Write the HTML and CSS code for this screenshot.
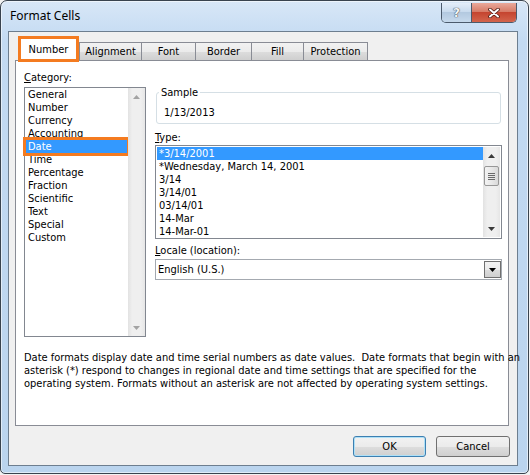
FILE: index.html
```html
<!DOCTYPE html>
<html lang="en">
<head>
    <meta charset="UTF-8">
    <title>Format Cells</title>
    <link rel="stylesheet" href="styles.css">
</head>
<body>

<div class="window">
    <div class="titlebar">
        <span class="title">Format Cells</span>
        <div class="caption-buttons">
            <div class="cap-btn help">?</div>
            <div class="cap-btn close">
                <svg width="12" height="10" viewBox="0 0 12 10">
                    <path d="M2 1.5 L10 8.5 M10 1.5 L2 8.5" stroke="#4a1a12" stroke-width="3.6" stroke-linecap="round"/>
                    <path d="M2 1.5 L10 8.5 M10 1.5 L2 8.5" stroke="#ffffff" stroke-width="2" stroke-linecap="round"/>
                </svg>
            </div>
        </div>
    </div>

    <div class="client">
        <div class="tabs">
            <div class="tab active">Number</div>
            <div class="tab w-align">Alignment</div>
            <div class="tab w-font">Font</div>
            <div class="tab w-border">Border</div>
            <div class="tab w-fill">Fill</div>
            <div class="tab w-prot">Protection</div>
        </div>

        <div class="panel">
            <div class="columns">
                <div class="col-left">
                    <div class="label"><u>C</u>ategory:</div>
                    <div class="listbox category">
                        <ul class="items">
                            <li>General</li>
                            <li>Number</li>
                            <li>Currency</li>
                            <li>Accounting</li>
                            <li class="selected marked">Date</li>
                            <li>Time</li>
                            <li>Percentage</li>
                            <li>Fraction</li>
                            <li>Scientific</li>
                            <li>Text</li>
                            <li>Special</li>
                            <li>Custom</li>
                        </ul>
                        <div class="scrollbar disabled">
                            <div class="arrow"><svg width="7" height="4"><path d="M0 4 L3.5 0 L7 4Z"/></svg></div>
                            <div class="arrow"><svg width="7" height="4"><path d="M0 0 L3.5 4 L7 0Z"/></svg></div>
                        </div>
                    </div>
                </div>

                <div class="col-right">
                    <fieldset class="sample">
                        <legend>Sample</legend>
                        <div>1/13/2013</div>
                    </fieldset>

                    <div class="label type-label"><u>T</u>ype:</div>
                    <div class="listbox type">
                        <ul class="items">
                            <li class="selected">*3/14/2001</li>
                            <li>*Wednesday, March 14, 2001</li>
                            <li>3/14</li>
                            <li>3/14/01</li>
                            <li>03/14/01</li>
                            <li>14-Mar</li>
                            <li>14-Mar-01</li>
                        </ul>
                        <div class="scrollbar">
                            <div class="arrow"><svg width="7" height="4"><path d="M0 4 L3.5 0 L7 4Z"/></svg></div>
                            <div class="thumb">
                                <svg width="7" height="7"><path d="M0 0.5 H7 M0 2.5 H7 M0 4.5 H7 M0 6.5 H7" stroke="#6a6a6a" stroke-width="1"/></svg>
                            </div>
                            <div class="spacer"></div>
                            <div class="arrow"><svg width="7" height="4"><path d="M0 0 L3.5 4 L7 0Z"/></svg></div>
                        </div>
                    </div>

                    <div class="label locale-label"><u>L</u>ocale (location):</div>
                    <div class="combo">
                        <span class="combo-text">English (U.S.)</span>
                        <div class="drop-btn"><svg width="7" height="4"><path d="M0 0 L3.5 4 L7 0Z"/></svg></div>
                    </div>
                </div>
            </div>

            <p class="note">
                Date formats display date and time serial numbers as date values.&nbsp; Date formats that begin with an<br>
                asterisk (*) respond to changes in regional date and time settings that are specified for the<br>
                operating system. Formats without an asterisk are not affected by operating system settings.
            </p>
        </div>

        <div class="actions">
            <button class="btn default">OK</button>
            <button class="btn">Cancel</button>
        </div>
    </div>
</div>

</body>
</html>
```

FILE: styles.css
```css
body {
    margin: 0;
    background: #f2f2f2;
    font-family: "DejaVu Sans Condensed", "DejaVu Sans", sans-serif;
    font-size: 11px;
    color: #000;
}

/* window frame */
.window {
    box-sizing: border-box;
    width: 529px;
    height: 474px;
    border: 1px solid #39434e;
    border-radius: 7px 7px 5px 5px;
    padding: 0 10px 7px 7px;
    background: linear-gradient(#d8e7f7, #c3daf2 40px, #bad4ee);
    box-shadow: inset 0 0 0 1px rgba(255, 255, 255, 0.55);
    display: flex;
    flex-direction: column;
}
.titlebar {
    height: 30px;
    display: flex;
    justify-content: space-between;
    align-items: flex-start;
}
.title {
    font-family: "Noto Sans", "DejaVu Sans", sans-serif;
    font-size: 12px;
    line-height: 16px;
    margin: 7px 0 0 2px;
}
.caption-buttons {
    display: flex;
    margin: 2px 1px 0 0;
    height: 19px;
    border: 1px solid #4b5a6c;
    border-top: none;
    border-radius: 0 0 5px 5px;
    overflow: hidden;
}
.cap-btn {
    display: flex;
    align-items: center;
    justify-content: center;
}
.help {
    width: 29px;
    border-right: 1px solid #4b5a6c;
    background: linear-gradient(#e4eef9, #c9dbee 45%, #b3c9e0 50%, #c6d9ec);
    font-family: "DejaVu Sans", sans-serif;
    font-weight: bold;
    font-size: 12px;
    color: #f4f6f8;
    text-shadow: 0 0 1px #2d3640, 0 0 1px #2d3640;
}
.close {
    width: 44px;
    background: linear-gradient(#e9a99b, #d77c68 45%, #c54530 50%, #d3644c);
}

/* client area */
.client {
    flex: 1;
    border: 1px solid #6d7e8f;
    background: #f0f0f0;
    padding: 0 8px 0 6px;
    display: flex;
    flex-direction: column;
}
.tabs {
    display: flex;
    align-items: flex-end;
    height: 26px;
    margin-top: 4px;
    padding-left: 3px;
    position: relative;
    z-index: 1;
}
.tab {
    box-sizing: border-box;
    height: 18px;
    margin-bottom: 2px;
    margin-left: -1px;
    border: 1px solid #898c95;
    border-bottom: none;
    background: linear-gradient(#f2f2f2, #ebebeb 50%, #dddddd 51%, #cfcfcf);
    text-align: center;
    line-height: 17px;
}
.tab.active {
    width: 61px;
    height: 26px;
    margin: 0;
    border: 3px solid #f47b20;
    background: #fff;
    line-height: 22px;
}
.tab.w-align { width: 63px; margin-left: 0; }
.tab.w-font { width: 55px; }
.tab.w-border { width: 57px; }
.tab.w-fill { width: 53px; }
.tab.w-prot { width: 65px; }

.panel {
    box-sizing: border-box;
    height: 366px;
    margin-top: -2px;
    border: 1px solid #898c95;
    background: #fff;
    padding: 10px 6px 0 8px;
}
.columns {
    display: grid;
    grid-template-columns: 122px 347px;
    column-gap: 9px;
}
.label {
    line-height: 13px;
    height: 13px;
}

/* list boxes */
.listbox {
    box-sizing: border-box;
    display: flex;
    border: 1px solid #828790;
    background: #fff;
}
.listbox.category {
    height: 250px;
    margin-top: 3px;
}
.listbox.type {
    height: 94px;
    margin-top: 1px;
    padding: 1px;
}
.items {
    flex: 1;
    margin: 0;
    padding: 0;
    list-style: none;
}
.items li {
    height: 13px;
    line-height: 13px;
    padding-left: 2px;
    white-space: nowrap;
}
.category .items li {
    margin: 0 1px;
}
.items li.selected {
    background: #3399ff;
    color: #fff;
}
.items li.marked {
    outline: 3px solid #f47b20;
    outline-offset: 0;
}

.scrollbar {
    width: 17px;
    display: flex;
    flex-direction: column;
    justify-content: space-between;
    background: linear-gradient(to right, #e2e2e2, #efefef 25%, #efefef 75%, #e6e6e6);
}
.scrollbar .arrow {
    height: 17px;
    display: flex;
    align-items: center;
    justify-content: center;
}
.scrollbar .arrow path {
    fill: #3a3a3a;
}
.scrollbar.disabled .arrow path {
    fill: #a3a3a3;
}
.scrollbar .thumb {
    box-sizing: border-box;
    height: 20px;
    margin: 2px 1px 0;
    border: 1px solid #979797;
    border-radius: 2px;
    background: linear-gradient(to right, #f3f3f3, #e8e8e8 50%, #d9d9d9);
    display: flex;
    align-items: center;
    justify-content: center;
}
.scrollbar .spacer {
    flex: 1;
}

/* sample group */
.sample {
    margin: 15px 1px 0;
    padding: 7px 7px 4px;
    border: 1px solid #d5dfe5;
    border-radius: 3px;
    line-height: 13px;
}
.sample legend {
    padding: 0 2px;
    margin-left: -5px;
    line-height: 13px;
}
.type-label {
    margin-top: 7px;
}
.locale-label {
    margin-top: 5px;
}

/* combo box */
.combo {
    box-sizing: border-box;
    height: 21px;
    margin-top: 2px;
    border: 1px solid #a4a9b0;
    background: #fff;
    display: flex;
    align-items: center;
    justify-content: space-between;
}
.combo-text {
    padding-left: 2px;
}
.drop-btn {
    box-sizing: border-box;
    width: 17px;
    height: 17px;
    border: 1px solid #707070;
    background: linear-gradient(#f2f2f2, #ebebeb 50%, #dddddd 51%, #cfcfcf);
    display: flex;
    align-items: center;
    justify-content: center;
}
.drop-btn path {
    fill: #000;
}

.note {
    margin: 14px 0 0;
    line-height: 13px;
    white-space: nowrap;
}

/* dialog buttons */
.actions {
    display: flex;
    justify-content: flex-end;
    gap: 10px;
    margin: 10px -1px 0 0;
}
.btn {
    box-sizing: border-box;
    width: 74px;
    height: 21px;
    border: 1px solid #707070;
    border-radius: 3px;
    background: linear-gradient(#f2f2f2, #ebebeb 50%, #dddddd 51%, #cfcfcf);
    font-family: inherit;
    font-size: 11px;
    color: #000;
    padding: 0;
}
.btn.default {
    width: 73px;
    border-color: #3c7fb1;
    box-shadow: inset 0 0 0 1px #aee0f7;
}
```
